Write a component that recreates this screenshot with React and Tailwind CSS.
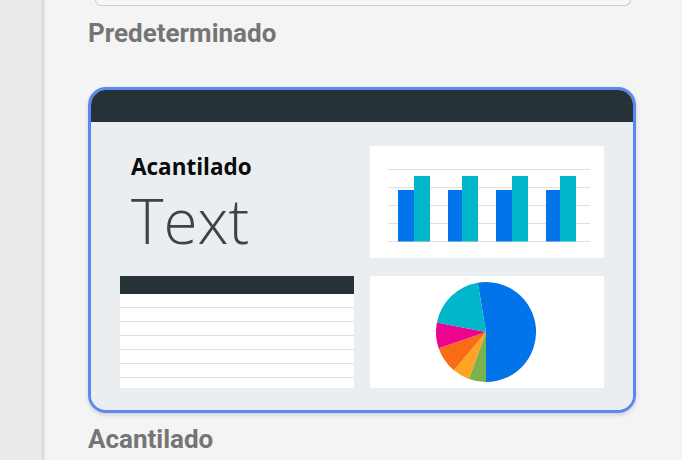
import React from "react";

const BLUE = "#0074e8";
const CYAN = "#00b6c9";

function BarChart() {
  const lines = [23.5, 41.5, 59.5, 77.5, 95.5];
  const groups = [
    [28, 16, 44],
    [78, 14, 92],
    [126, 16, 142],
    [176, 14, 190],
  ];
  return (
    <svg width="234" height="112" viewBox="0 0 234 112" className="block">
      {lines.map((y) => (
        <line key={y} x1="18" x2="220" y1={y} y2={y} stroke="#e0e0e0" strokeWidth="1" />
      ))}
      {groups.map(([bx, bw, cx]) => (
        <g key={bx}>
          <rect x={bx} y="44" width={bw} height="51.5" fill={BLUE} />
          <rect x={cx} y="30" width="16" height="65.5" fill={CYAN} />
        </g>
      ))}
    </svg>
  );
}

function PieChart() {
  return (
    <svg width="234" height="112" viewBox="0 0 234 112" className="block">
      <path d="M116 56 L107.75 6.7 A50 50 0 1 1 116 106 Z" fill="#0074e8" />
      <path d="M116 56 L116 106 A50 50 0 0 1 98.9 103 Z" fill="#7cb24e" />
      <path d="M116 56 L98.9 103 A50 50 0 0 1 83.9 94.3 Z" fill="#ffa422" />
      <path d="M116 56 L83.9 94.3 A50 50 0 0 1 68.7 72.3 Z" fill="#f76c15" />
      <path d="M116 56 L68.7 72.3 A50 50 0 0 1 66.9 46.5 Z" fill="#ee0290" />
      <path d="M116 56 L66.9 46.5 A50 50 0 0 1 107.75 6.7 Z" fill="#00b6c9" />
    </svg>
  );
}

function Table() {
  return (
    <div className="w-[234px] h-[112px] bg-white flex flex-col overflow-hidden">
      <div className="h-[18px] bg-[#263238] shrink-0" />
      {[0, 1, 2, 3, 4, 5].map((i) => (
        <div key={i} className="h-[14px] shrink-0 border-b border-[#e0e0e0]" />
      ))}
    </div>
  );
}

export default function App() {
  return (
    <div className="w-[682px] h-[460px] overflow-hidden flex bg-[#f4f4f4]" style={{ fontFamily: "Roboto, 'Liberation Sans', sans-serif" }}>
      <div className="w-[43px] shrink-0 bg-[#eaeaea] border-r border-[#d2d2d2] shadow-[1px_0_3px_rgba(0,0,0,0.12)]" />
      <div className="flex-1 flex flex-col pl-[45px]">
        <div className="ml-[7px] w-[536px] h-[6px] bg-[#f7f7f7] border border-t-0 border-[#cdcdcd] rounded-b-[14px]" />
        <div className="mt-[12px] text-[26px] leading-[30px] font-bold text-[#757575]">Predeterminado</div>
        <div className="mt-[39px] w-[548px] rounded-[18px] border-[3px] border-[#5b87f2] overflow-hidden shadow-[0_2px_4px_rgba(0,0,0,0.15)]">
          <div className="h-[32px] bg-[#263238]" />
          <div className="bg-[#eaeef1] pt-[24px] pb-[22px] px-[29px] grid grid-cols-[234px_234px] gap-x-[16px] gap-y-[18px]">
            <div className="h-[112px] pl-[11px] pt-[8px] flex flex-col" style={{ fontFamily: "'Open Sans', sans-serif" }}>
              <div className="text-[22.5px] leading-[26px] font-bold text-[#0a0a0a]">Acantilado</div>
              <div className="mt-[2px] text-[62px] leading-[76px] font-light text-[#424242]">Text</div>
            </div>
            <div className="bg-white h-[112px]">
              <BarChart />
            </div>
            <Table />
            <div className="bg-white h-[112px]">
              <PieChart />
            </div>
          </div>
        </div>
        <div className="mt-[11px] text-[26px] leading-[30px] font-bold text-[#757575]">Acantilado</div>
      </div>
    </div>
  );
}
